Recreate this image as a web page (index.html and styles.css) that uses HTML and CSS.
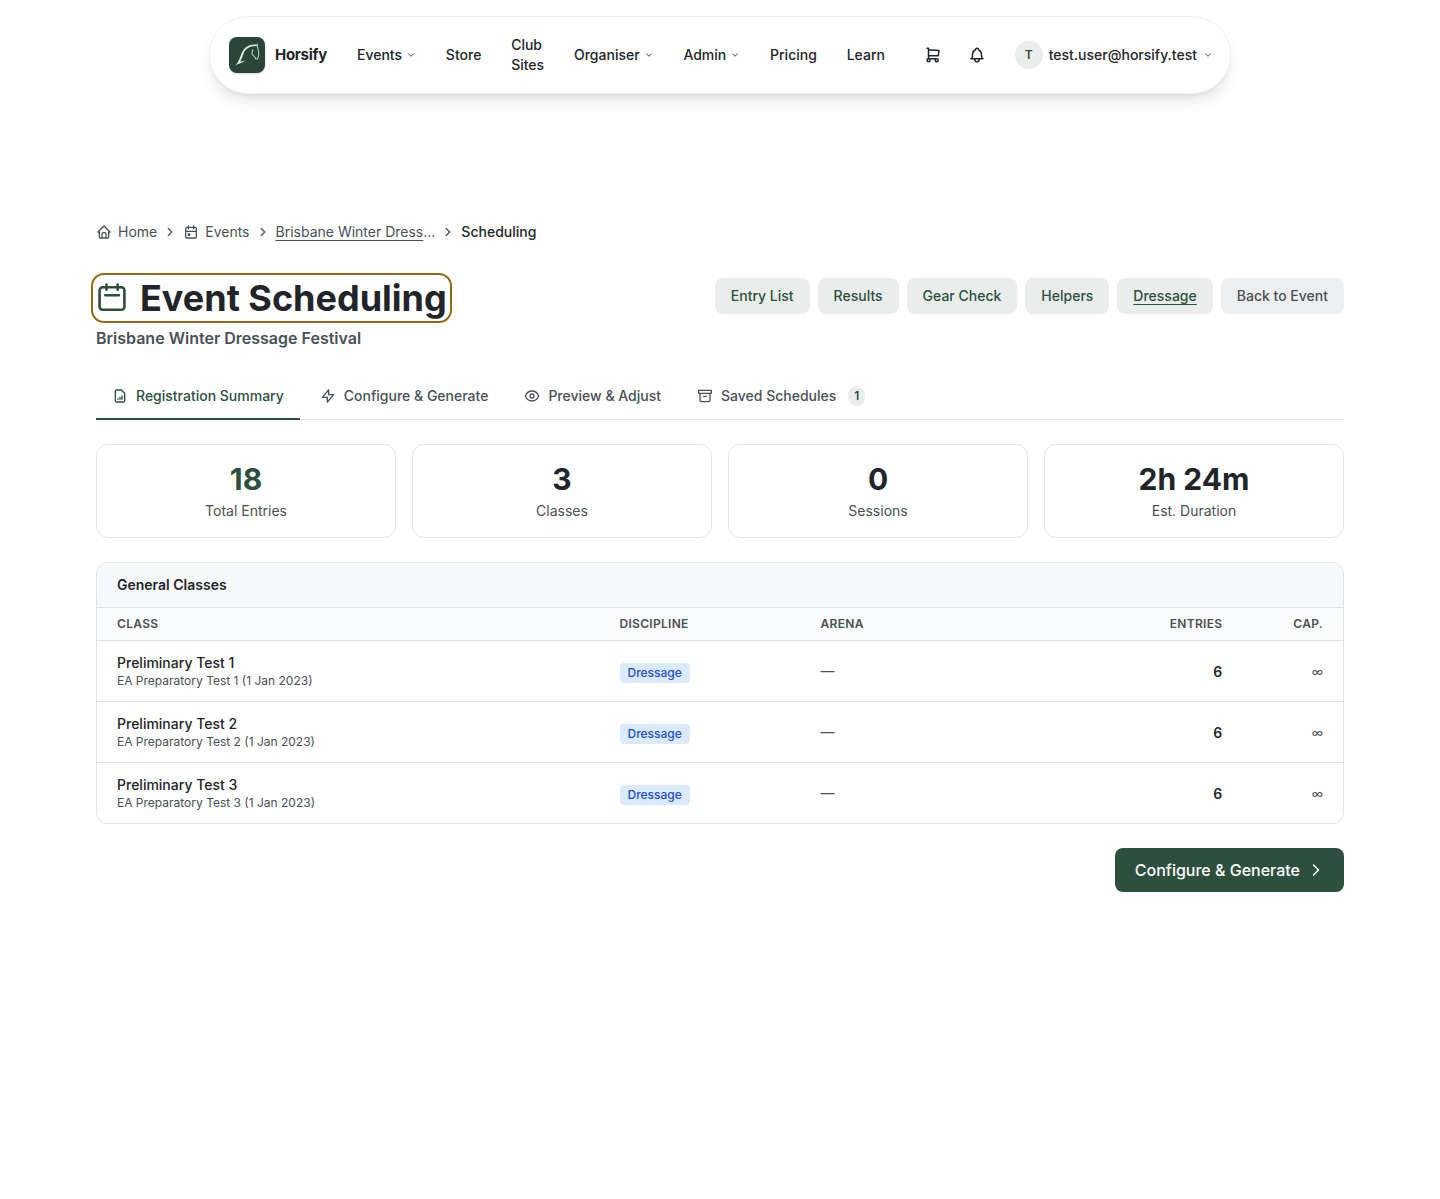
FILE: index.html
```html
<!DOCTYPE html>
<html lang="en">
<head>
<meta charset="utf-8">
<title>Event Scheduling - Horsify</title>
<link rel="stylesheet" href="styles.css">
</head>
<body>
<svg class="sprite" aria-hidden="true">
  <symbol id="down" viewBox="0 0 24 24"><path d="M6 9l6 6l6 -6"/></symbol>
  <symbol id="right" viewBox="0 0 24 24"><path d="M9 6l6 6l-6 6"/></symbol>
</svg>
<header class="nav">
  <a class="brand">
    <span class="logo"><svg viewBox="0 0 36 36"><path class="mane" d="M6 28.800C9.500 25.500 10.200 22 12 17.500C14.800 10.500 20 6.600 28 7.800V9C20.500 8.300 16 12 14.200 17.500C13.200 20.800 12.400 22.800 11.200 24.500C13 24.600 14.800 24.200 16.600 23.200C13.500 26.400 9.500 26.200 6 28.800Z"/><path class="face" d="M28.300 7v2.200c1.500 3.600 1.700 6.500 1.100 10.300l-.9 2.400l-1.800 .1c-.4 -2.300 -2.300 -3.100 -3.500 -4.600c-.6 -1.400 -.1 -3 .8 -4.500"/></svg></span>
    <span class="brand-name">Horsify</span>
  </a>
  <nav class="links">
    <a class="link">Events <svg class="caret"><use href="#down"/></svg></a>
    <a class="link">Store</a>
    <a class="link club">Club Sites</a>
    <a class="link">Organiser <svg class="caret"><use href="#down"/></svg></a>
    <a class="link">Admin <svg class="caret"><use href="#down"/></svg></a>
    <a class="link">Pricing</a>
    <a class="link">Learn</a>
  </nav>
  <div class="tools">
    <svg class="tool" viewBox="0 0 24 24"><path d="M4 19a2 2 0 1 0 4 0a2 2 0 1 0 -4 0M15 19a2 2 0 1 0 4 0a2 2 0 1 0 -4 0M17 17h-11v-14h-2M6 5l14 1l-1 7h-13"/></svg>
    <svg class="tool" viewBox="0 0 24 24"><path d="M10 5a2 2 0 1 1 4 0a7 7 0 0 1 4 6v3a4 4 0 0 0 2 3h-16a4 4 0 0 0 2 -3v-3a7 7 0 0 1 4 -6M9 17v1a3 3 0 0 0 6 0v-1"/></svg>
  </div>
  <div class="user"><span class="avatar">T</span><span>test.user@horsify.test</span><svg class="caret"><use href="#down"/></svg></div>
</header>
<main class="page">
  <div class="crumbs">
    <a class="crumb"><svg class="i16" viewBox="0 0 24 24"><path d="M5 12h-2l9 -9l9 9h-2M5 12v7a2 2 0 0 0 2 2h10a2 2 0 0 0 2 -2v-7M9 21v-6a2 2 0 0 1 2 -2h2a2 2 0 0 1 2 2v6"/></svg>Home</a>
    <svg class="sep"><use href="#right"/></svg>
    <a class="crumb"><svg class="i16" viewBox="0 0 24 24"><path d="M4 7a2 2 0 0 1 2 -2h12a2 2 0 0 1 2 2v12a2 2 0 0 1 -2 2h-12a2 2 0 0 1 -2 -2zM16 3v4M8 3v4M4 11h16M8 15h2v2h-2z"/></svg>Events</a>
    <svg class="sep"><use href="#right"/></svg>
    <span><a class="under">Brisbane Winter Dress</a>...</span>
    <svg class="sep"><use href="#right"/></svg>
    <span class="current">Scheduling</span>
  </div>
  <div class="head">
    <div>
      <h1 class="title"><svg class="title-icon" viewBox="0 0 32 32"><path d="M3.600 8.200a3 3 0 0 1 3 -3h18.800a3 3 0 0 1 3 3v16.600a3 3 0 0 1 -3 3h-18.800a3 3 0 0 1 -3 -3zM10.500 2.600v5.200M21.700 2.600v5.200M9.300 13.300h13.600"/></svg>Event Scheduling</h1>
      <p class="subtitle">Brisbane Winter Dressage Festival</p>
    </div>
    <div class="actions">
      <a class="btn">Entry List</a><a class="btn">Results</a><a class="btn">Gear Check</a><a class="btn">Helpers</a><a class="btn under">Dressage</a><a class="btn back">Back to Event</a>
    </div>
  </div>
  <div class="tabs">
    <a class="tab active"><svg class="i16" viewBox="0 0 24 24"><path d="M14 3h-7a2 2 0 0 0 -2 2v14a2 2 0 0 0 2 2h10a2 2 0 0 0 2 -2v-11zM9 17v-1M12 17v-3M15 17v-5"/></svg>Registration Summary</a>
    <a class="tab"><svg class="i16" viewBox="0 0 24 24"><path d="M13 3v7h7.500l-9.500 11v-7h-7.500z"/></svg>Configure &amp; Generate</a>
    <a class="tab"><svg class="i16" viewBox="0 0 24 24"><path d="M2 12c2 -4.700 5.300 -7.500 10 -7.500s8 2.800 10 7.500c-2 4.700 -5.300 7.500 -10 7.500s-8 -2.800 -10 -7.500zM9 12a3 3 0 1 0 6 0a3 3 0 1 0 -6 0"/></svg>Preview &amp; Adjust</a>
    <a class="tab"><svg class="i16" viewBox="0 0 24 24"><path d="M2.500 3.500h19v4.500h-19zM4.500 8v10.500a2 2 0 0 0 2 2h11a2 2 0 0 0 2 -2v-10.500M10 12.500h4"/></svg>Saved Schedules<span class="count">1</span></a>
  </div>
  <section class="stats">
    <div class="stat"><strong class="value green">18</strong><span>Total Entries</span></div>
    <div class="stat"><strong class="value">3</strong><span>Classes</span></div>
    <div class="stat"><strong class="value">0</strong><span>Sessions</span></div>
    <div class="stat"><strong class="value">2h 24m</strong><span>Est. Duration</span></div>
  </section>
  <section class="panel">
    <h2 class="panel-title">General Classes</h2>
    <div class="row thead"><span>CLASS</span><span>DISCIPLINE</span><span>ARENA</span><span class="num">ENTRIES</span><span class="num">CAP.</span></div>
    <div class="row"><div><div class="name">Preliminary Test 1</div><div class="test">EA Preparatory Test 1 (1 Jan 2023)</div></div><span class="cell"><b class="tag">Dressage</b></span><span>—</span><span class="num entries">6</span><span class="num cap">∞</span></div>
    <div class="row"><div><div class="name">Preliminary Test 2</div><div class="test">EA Preparatory Test 2 (1 Jan 2023)</div></div><span class="cell"><b class="tag">Dressage</b></span><span>—</span><span class="num entries">6</span><span class="num cap">∞</span></div>
    <div class="row"><div><div class="name">Preliminary Test 3</div><div class="test">EA Preparatory Test 3 (1 Jan 2023)</div></div><span class="cell"><b class="tag">Dressage</b></span><span>—</span><span class="num entries">6</span><span class="num cap">∞</span></div>
  </section>
  <div class="next"><a class="primary">Configure &amp; Generate<svg class="arrow"><use href="#right"/></svg></a></div>
</main>
</body>
</html>
```
FILE: styles.css
```css
* { box-sizing: border-box; }
body { margin: 0; padding-top: 16px; background: #fff; color: #495057; font: 400 14px/20px Inter, "Liberation Sans", sans-serif; }
svg { flex: none; fill: none; stroke: currentColor; stroke-width: 2; stroke-linecap: round; stroke-linejoin: round; }
.sprite { display: none; }
h1, h2, p { margin: 0; }

.nav { display: flex; align-items: center; width: 1022px; height: 78px; margin: 0 auto; padding: 0 17px 0 19px; border: 1px solid #f1f1f2; border-radius: 39px; background: #fff; box-shadow: 0 10px 15px -3px rgba(0,0,0,.1), 0 4px 6px -4px rgba(0,0,0,.1); color: #212529; font-weight: 500; }
.brand { display: flex; align-items: center; gap: 10px; width: 128px; }
.logo { width: 36px; height: 36px; border-radius: 8px; background: #284538; box-shadow: 0 1px 2px rgba(0,0,0,.15); }
.logo svg { display: block; width: 36px; height: 36px; }
.mane { fill: #dfe5e1; stroke: none; }
.face { stroke: #c3cdc7; stroke-width: 1.1; }
.brand-name { font-size: 15px; font-weight: 700; letter-spacing: -0.3px; }
.links { display: flex; align-items: center; gap: 29.800px; flex: 1; }
.link { display: flex; align-items: center; gap: 4px; }
.club { width: 33px; }
.caret { width: 10px; height: 10px; }
.tools { display: flex; gap: 26px; margin-right: 29px; }
.tool { width: 18px; height: 18px; }
.user { display: flex; align-items: center; gap: 6px; }
.avatar { width: 28px; height: 28px; border-radius: 50%; background: #eaedeb; color: #2d4f3e; font-size: 12px; font-weight: 600; line-height: 28px; text-align: center; }

.page { width: 1248px; margin: 128px auto 0; }
.crumbs { display: flex; align-items: center; height: 20px; gap: 6px; }
.crumb { display: flex; align-items: center; gap: 6px; }
.i16 { width: 16px; height: 16px; }
.sep { width: 14px; height: 14px; }
.under { text-decoration: underline; text-underline-offset: 3px; }
.current { color: #212529; font-weight: 500; }

.head { display: flex; justify-content: space-between; margin-top: 36px; height: 96px; }
.title { display: flex; align-items: center; gap: 12px; height: 40px; color: #212529; font-size: 36px; line-height: 41px; font-weight: 700; outline: 2px solid #8f6b12; outline-offset: 3px; border-radius: 8px; }
.title-icon { width: 32px; height: 32px; color: #2d4f3e; stroke-width: 2.6; }
.subtitle { margin-top: 8px; font-size: 16px; line-height: 24px; font-weight: 600; }
.actions { display: flex; gap: 8px; height: 36px; }
.btn { padding: 8px 16px; border-radius: 8px; background: #eaedeb; color: #2d4f3e; font-weight: 500; }
.back { background: #edeeef; color: #495057; }

.tabs { display: flex; gap: 4px; height: 46px; border-bottom: 1px solid #dee2e6; }
.tab { display: flex; align-items: center; gap: 8px; height: 46px; padding: 0 16px; border-bottom: 2px solid transparent; font-weight: 500; }
.active { color: #2d4f3e; border-color: #2d4f3e; }
.count { margin-left: 4px; padding: 0 6px; border-radius: 10px; background: #eaedeb; color: #2d4f3e; font-size: 12px; font-weight: 600; }

.stats { display: grid; grid-template-columns: repeat(4, 1fr); gap: 16px; margin-top: 24px; }
.stat { display: flex; flex-direction: column; gap: 4px; height: 94px; padding: 16px; border: 1px solid #e1e4e8; border-radius: 12px; text-align: center; }
.value { color: #212529; font-size: 30px; line-height: 36px; font-weight: 700; }
.green { color: #2d4f3e; }

.panel { margin-top: 24px; border: 1px solid #e1e4e8; border-radius: 12px; overflow: hidden; }
.panel-title { padding: 12px 20px; background: #f8f9fb; color: #212529; font-size: 14px; line-height: 20px; font-weight: 600; }
.row { display: grid; grid-template-columns: 502.500px 201px 1fr 120px 100.700px; align-items: center; height: 61px; padding-left: 20px; border-top: 1px solid #dee2e6; }
.thead { height: 33px; background: #fbfcfd; font-size: 12px; font-weight: 600; letter-spacing: .3px; }
.num { padding-right: 20px; text-align: right; }
.name { color: #212529; font-weight: 500; line-height: 20px; }
.test { font-size: 12px; line-height: 16px; }
.cell { padding-top: 2px; }
.tag { display: inline-block; padding: 0 8px; border-radius: 4px; background: #dbeafe; color: #1d4ed8; font-size: 12px; line-height: 20px; font-weight: 500; }
.entries { padding-top: 2px; color: #212529; font-weight: 600; }
.cap { padding-top: 2px; font-size: 12px; }

.next { display: flex; justify-content: flex-end; margin-top: 24px; }
.primary { display: flex; align-items: center; gap: 6px; height: 44px; padding: 0 18px 0 20px; border-radius: 8px; background: #2d4f3e; color: #fff; font-size: 16px; font-weight: 500; }
.arrow { width: 20px; height: 20px; stroke-width: 1.700; }
```
